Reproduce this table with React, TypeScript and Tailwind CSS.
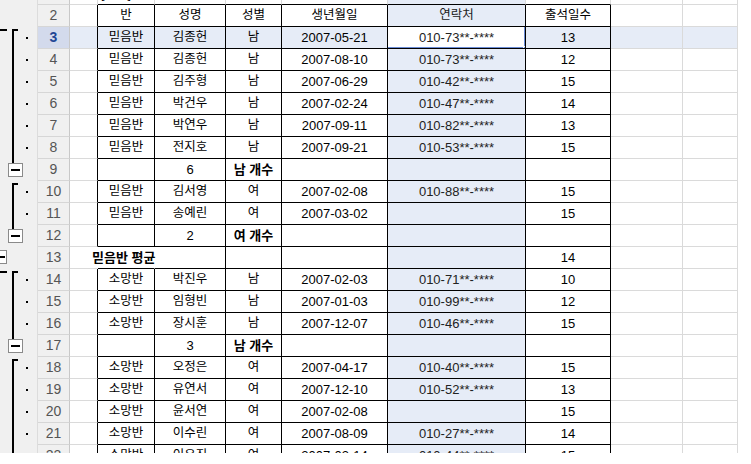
import React from 'react';

const WIDTHS = ['w-[28px]', 'w-[57px]', 'w-[71px]', 'w-[56px]', 'w-[106px]', 'w-[138px]', 'w-[85px]', 'w-[72px]', 'w-[55px]'];
const F = 5;

type RowInfo = { n: number; cells: string[]; bold?: number[] };

const d = (b: string, n: string, g: string, dt: string, ph: string, at: string) => ['', b, n, g, dt, ph, at, '', ''];

const ROWS: RowInfo[] = [
  { n: 1, cells: ['', '[결과]', '', '', '', '', '', '', ''] },
  { n: 2, cells: d('반', '성명', '성별', '생년월일', '연락처', '출석일수') },
  { n: 3, cells: d('믿음반', '김종헌', '남', '2007-05-21', '010-73**-****', '13') },
  { n: 4, cells: d('믿음반', '김종헌', '남', '2007-08-10', '010-73**-****', '12') },
  { n: 5, cells: d('믿음반', '김주형', '남', '2007-06-29', '010-42**-****', '15') },
  { n: 6, cells: d('믿음반', '박건우', '남', '2007-02-24', '010-47**-****', '14') },
  { n: 7, cells: d('믿음반', '박연우', '남', '2007-09-11', '010-82**-****', '13') },
  { n: 8, cells: d('믿음반', '전지호', '남', '2007-09-21', '010-53**-****', '15') },
  { n: 9, cells: d('', '6', '남 개수', '', '', ''), bold: [3] },
  { n: 10, cells: d('믿음반', '김서영', '여', '2007-02-08', '010-88**-****', '15') },
  { n: 11, cells: d('믿음반', '송예린', '여', '2007-03-02', '', '15') },
  { n: 12, cells: d('', '2', '여 개수', '', '', ''), bold: [3] },
  { n: 13, cells: ['믿음반 평균', '', '', '', '', '', '14', '', ''], bold: [0] },
  { n: 14, cells: d('소망반', '박진우', '남', '2007-02-03', '010-71**-****', '10') },
  { n: 15, cells: d('소망반', '임형빈', '남', '2007-01-03', '010-99**-****', '12') },
  { n: 16, cells: d('소망반', '장시훈', '남', '2007-12-07', '010-46**-****', '15') },
  { n: 17, cells: d('', '3', '남 개수', '', '', ''), bold: [3] },
  { n: 18, cells: d('소망반', '오정은', '여', '2007-04-17', '010-40**-****', '15') },
  { n: 19, cells: d('소망반', '유연서', '여', '2007-12-10', '010-52**-****', '13') },
  { n: 20, cells: d('소망반', '윤서연', '여', '2007-02-08', '', '15') },
  { n: 21, cells: d('소망반', '이수린', '여', '2007-08-09', '010-27**-****', '14') },
  { n: 22, cells: d('소망반', '이유진', '여', '2007-03-14', '010-44**-****', '15') },
];

const isTable = (r: number, c: number) => {
  if (r < 2 || r > 22) return false;
  if (c < 1 || c > 6) return false;
  if (r === 13 && (c === 1 || c === 2)) return false;
  return true;
};

const hideRight = (r: number, c: number) => r === 13 && (c === 0 || c === 1);

type OutlineKind = {
  outerStub?: boolean;
  outerBox?: boolean;
  mid?: 'top' | 'line' | 'box';
  dot?: boolean;
};

const outlineFor = (n: number): OutlineKind => {
  const o: OutlineKind = {};
  if (n === 3 || n === 14) o.outerStub = true;
  if (n === 13) o.outerBox = true;
  if ([3, 10, 14, 18].includes(n)) o.mid = 'top';
  else if ([4, 5, 6, 7, 8, 11, 15, 16, 19, 20, 21, 22].includes(n)) o.mid = 'line';
  else if ([9, 12, 17].includes(n)) o.mid = 'box';
  if ([3, 4, 5, 6, 7, 8, 10, 11, 14, 15, 16, 18, 19, 20, 21, 22].includes(n)) o.dot = true;
  return o;
};

function Outline({ n }: { n: number }) {
  const o = outlineFor(n);
  return (
    <svg width="37" height="22" viewBox="0 0 37 22" className="block">
      {o.outerStub && <rect x="0" y="2" width="7" height="2" fill="#000" />}
      {o.outerBox && (
        <g>
          <rect x="-6.5" y="3.5" width="13" height="13" fill="#fff" stroke="#8a8a8a" />
          <rect x="-3" y="9" width="8" height="2" fill="#000" />
        </g>
      )}
      {o.mid === 'top' && (
        <g>
          <rect x="12" y="2" width="2" height="20" fill="#000" />
          <rect x="12" y="2" width="6" height="2" fill="#000" />
        </g>
      )}
      {o.mid === 'line' && <rect x="12" y="0" width="2" height="22" fill="#000" />}
      {o.mid === 'box' && (
        <g>
          <rect x="12" y="0" width="2" height="4" fill="#000" />
          <rect x="8.5" y="4.5" width="14" height="13" fill="#fff" stroke="#8a8a8a" />
          <rect x="11" y="10" width="9" height="2" fill="#000" />
        </g>
      )}
      {o.dot && <rect x="26" y="10" width="2" height="2" fill="#000" />}
    </svg>
  );
}

function Cell({ r, c, text, bold }: { r: number; c: number; text: string; bold: boolean }) {
  const right = isTable(r, c) || isTable(r, c + 1) ? 'border-r-black' : hideRight(r, c) ? 'border-r-transparent' : 'border-r-[#dadada]';
  const bottom = isTable(r, c) || isTable(r + 1, c) ? 'border-b-black' : 'border-b-[#dadada]';
  const active = r === 3 && c === F;
  const bg = active ? 'bg-white' : c === F || r === 3 ? 'bg-[#e6ecf7]' : '';
  const hangul = /[\uac00-\ud7a3]/.test(text);
  const size = bold ? 'text-[13px] font-bold' : hangul ? 'text-[12.5px]' : 'text-[13px]';
  const align =
    c === 0 ? 'justify-start pl-[22px] overflow-visible' : r === 1 ? 'justify-start pl-[3px] overflow-visible' : 'justify-center overflow-hidden';
  const color = c === F ? 'text-[#222]' : 'text-black';
  return (
    <div className={`relative flex h-full shrink-0 items-center whitespace-nowrap border-r border-b ${WIDTHS[c]} ${right} ${bottom} ${bg} ${align} ${size} ${color}`}>
      {r === 1 ? <span className="mt-[2px]">{text}</span> : text}
      {active && (
        <>
          <div className="pointer-events-none absolute -left-[2px] -top-[2px] -right-px -bottom-px border-2 border-[#6a8bd5]" />
          <div className="absolute -right-[4px] -bottom-[4px] h-[6px] w-[6px] border border-white bg-[#6a8bd5]" />
        </>
      )}
    </div>
  );
}

function Row({ info }: { info: RowInfo }) {
  const { n, cells, bold = [] } = info;
  const sel = n === 3;
  return (
    <div className="flex h-[22px]">
      <div className="h-full w-[38px] shrink-0 border-r border-r-[#dcdcdc] bg-[#f0f0f0]">
        <Outline n={n} />
      </div>
      <div
        className={`flex h-full w-[32px] shrink-0 items-center justify-center border-r border-b border-r-[#c8c8c8] border-b-[#d6d6d6] text-[14px] ${
          sel ? 'bg-[#d3daec] font-bold text-[#1f4796]' : 'bg-[#f0f0f0] text-[#555]'
        }`}
      >
        {n === 1 ? '' : n}
      </div>
      {cells.map((t, c) => (
        <Cell key={c} r={n} c={c} text={t} bold={bold.includes(c)} />
      ))}
    </div>
  );
}

export default function App() {
  return (
    <div className="h-[464px] w-[751px] bg-white [font-family:'Liberation_Sans','Noto_Sans_CJK_KR',sans-serif]">
      <div className="h-[453px] w-[738px] overflow-hidden">
        <div className="-mt-[17px]">
          {ROWS.map((r) => (
            <Row key={r.n} info={r} />
          ))}
        </div>
      </div>
    </div>
  );
}
